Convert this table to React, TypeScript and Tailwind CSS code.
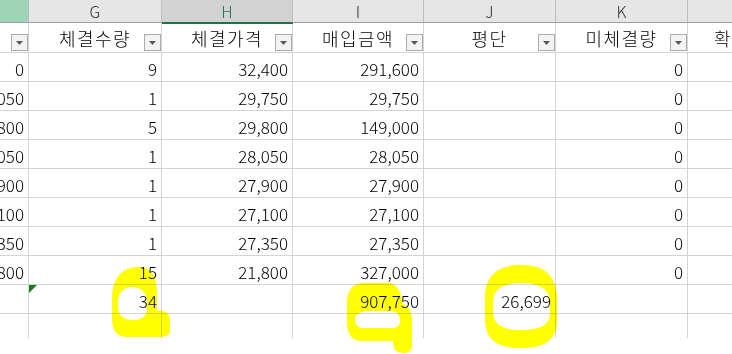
import React from "react";

const W = ["w-[29px]", "w-[133px]", "w-[131px]", "w-[131px]", "w-[132px]", "w-[132px]"];

function FilterBtn() {
  return (
    <div className="absolute right-0 bottom-[1px] w-[17px] h-[17px] border border-[#acacac] bg-[#f3f3f3] flex items-center justify-center">
      <svg width="7" height="4" viewBox="0 0 7 4" className="mt-[1px]">
        <polygon points="0,0 7,0 3.5,4" fill="#595959" />
      </svg>
    </div>
  );
}

const F = ["0", "30,050", "29,800", "28,050", "27,900", "27,100", "27,350", "21,800"];
const G = ["9", "1", "5", "1", "1", "1", "1", "15"];
const H = ["32,400", "29,750", "29,800", "28,050", "27,900", "27,100", "27,350", "21,800"];
const I = ["291,600", "29,750", "149,000", "28,050", "27,900", "27,100", "27,350", "327,000"];

function Cell({ w, children, rel }: { w: string; children?: React.ReactNode; rel?: boolean }) {
  return (
    <div
      className={`${w} shrink-0 h-full border-r border-b border-[#d4d4d4] flex items-center justify-end pr-[4px] overflow-hidden whitespace-nowrap text-[17px] font-light leading-none pt-[3px] ${rel ? "relative" : ""}`}
    >
      {children}
    </div>
  );
}

function LastCell() {
  return <div className="flex-1 h-full border-b border-[#d4d4d4]" />;
}

export default function App() {
  return (
    <div className="relative w-[732px] h-[354px] overflow-hidden bg-white text-black [font-family:'Noto_Sans_CJK_KR','Noto_Sans',sans-serif]">
      <div className="flex flex-col">
        {/* column letters */}
        <div className="flex h-[23px] text-[16px] font-light text-[#333] leading-none">
          <div className="w-[29px] shrink-0 bg-[#9fd5b7] border-r border-b border-r-[#bdbdbd] border-b-[#9e9e9e]" />
          <div className="w-[133px] shrink-0 bg-[#e6e6e6] border-r border-b border-r-[#bdbdbd] border-b-[#9e9e9e] flex items-center justify-center">G</div>
          <div className="relative z-10 w-[131px] shrink-0 bg-[#d2d2d2] border-r border-b border-r-[#bdbdbd] border-b-[#217346] shadow-[0_1px_0_#217346] flex items-center justify-center text-[#217346]">H</div>
          <div className="w-[131px] shrink-0 bg-[#e6e6e6] border-r border-b border-r-[#bdbdbd] border-b-[#9e9e9e] flex items-center justify-center">I</div>
          <div className="w-[132px] shrink-0 bg-[#e6e6e6] border-r border-b border-r-[#bdbdbd] border-b-[#9e9e9e] flex items-center justify-center">J</div>
          <div className="w-[132px] shrink-0 bg-[#e6e6e6] border-r border-b border-r-[#bdbdbd] border-b-[#9e9e9e] flex items-center justify-center">K</div>
          <div className="flex-1 bg-[#e6e6e6] border-b border-b-[#9e9e9e]" />
        </div>

        {/* header row with filters */}
        <div className="flex h-[30px] text-[18px] font-light">
          <div className="relative w-[29px] shrink-0 h-full border-r border-b border-[#d4d4d4]">
            <FilterBtn />
          </div>
          {[
            ["w-[133px]", "체결수량"],
            ["w-[131px]", "체결가격"],
            ["w-[131px]", "매입금액"],
            ["w-[132px]", "평단"],
            ["w-[132px]", "미체결량"],
          ].map(([w, t]) => (
            <div key={t} className={`${w} relative shrink-0 h-full border-r border-b border-[#d4d4d4] flex items-center justify-center leading-none pt-[1px] tracking-[1.5px]`}>
              {t}
              <FilterBtn />
            </div>
          ))}
          <div className="flex-1 h-full border-b border-[#d4d4d4] overflow-hidden whitespace-nowrap flex items-center pl-[26px] leading-none pt-[1px]">
            확인
          </div>
        </div>

        {/* data rows */}
        {F.map((f, i) => (
          <div key={i} className="flex h-[29px]">
            <Cell w={W[0]}>{f}</Cell>
            <Cell w={W[1]}>{G[i]}</Cell>
            <Cell w={W[2]}>{H[i]}</Cell>
            <Cell w={W[3]}>{I[i]}</Cell>
            <Cell w={W[4]} />
            <Cell w={W[5]}>0</Cell>
            <LastCell />
          </div>
        ))}

        {/* total row */}
        <div className="flex h-[29px]">
          <Cell w={W[0]} />
          <Cell w={W[1]} rel>
            <svg width="8" height="8" viewBox="0 0 8 8" className="absolute left-0 top-0">
              <polygon points="0,0 8,0 0,8" fill="#1a7d1a" />
            </svg>
            34
          </Cell>
          <Cell w={W[2]} />
          <Cell w={W[3]}>907,750</Cell>
          <Cell w={W[4]}>26,699</Cell>
          <Cell w={W[5]} />
          <LastCell />
        </div>

        {/* partial row */}
        <div className="flex h-[24px]">
          <div className="w-[29px] shrink-0 border-r border-[#d4d4d4]" />
          <div className="w-[133px] shrink-0 border-r border-[#d4d4d4]" />
          <div className="w-[131px] shrink-0 border-r border-[#d4d4d4]" />
          <div className="w-[131px] shrink-0 border-r border-[#d4d4d4]" />
          <div className="w-[132px] shrink-0 border-r border-[#d4d4d4]" />
          <div className="w-[132px] shrink-0 border-r border-[#d4d4d4]" />
          <div className="flex-1" />
        </div>
      </div>

      {/* highlighter scribbles */}
      <svg
        className="absolute left-0 top-0 pointer-events-none mix-blend-multiply"
        width="732"
        height="354"
        viewBox="0 0 732 354"
      >
        <path
          fillRule="evenodd"
          fill="#ffff00"
          d="M 112 300 C 112 278, 122 267, 138 267 C 152 267, 157 278, 157 292 L 157 311 C 163 310, 170 312, 170 320 L 170 330 C 170 336, 165 337, 158 337 L 128 337 C 116 337, 112 330, 112 318 Z
             M 118 303 C 118 292, 124 287, 132 287 C 141 287, 147 293, 147 302 L 147 308 C 147 317, 141 320, 133 320 C 123 320, 118 315, 118 306 Z"
        />
        <path
          fillRule="evenodd"
          fill="#ffff00"
          d="M 347 305 C 347 290, 352 283, 366 283 L 388 283 C 398 283, 401 293, 403 304 C 409 306, 412 312, 412 322 L 412 345 C 412 351, 409 353, 403 353 C 395 353, 393 348, 393 341 L 362 341 C 351 341, 347 333, 347 322 Z
             M 355 319 C 355 314, 360 311, 372 311 L 390 311 C 397 311, 400 315, 400 320 C 400 326, 398 328, 392 328 L 364 328 C 358 328, 355 325, 355 319 Z"
        />
        <path
          fillRule="evenodd"
          fill="#ffff00"
          d="M 521 265 C 545 265, 557 276, 557 300 L 557 320 C 557 340, 545 348, 521 348 C 497 348, 485 340, 485 318 L 485 298 C 485 276, 497 265, 521 265 Z
             M 521 283 C 540 283, 550 290, 550 302 L 550 314 C 550 325, 540 330, 521 330 C 502 330, 493 324, 493 312 L 493 302 C 493 290, 502 283, 521 283 Z"
        />
      </svg>
    </div>
  );
}
